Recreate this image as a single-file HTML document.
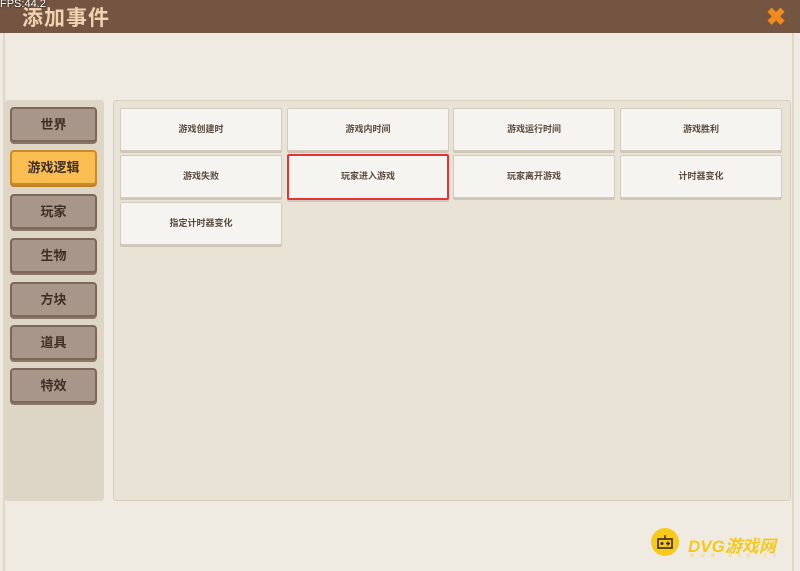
<!DOCTYPE html>
<html><head><meta charset="utf-8"><style>
*{margin:0;padding:0;box-sizing:border-box}
body{width:800px;height:571px;overflow:hidden;background:#efebe2;font-family:"Liberation Sans","Noto Sans CJK SC",sans-serif;position:relative}
.hdr{position:absolute;left:0;top:0;width:800px;height:33px;background:#735541}
.title{position:absolute;left:22px;top:2px;font-size:21px;font-weight:bold;color:#f0d2ae;letter-spacing:1px}
.fps{position:absolute;left:0;top:-2px;font-size:11px;color:#fff;text-shadow:0 0 2px #000}
.x{position:absolute;left:766px;top:3px;font-size:24px;font-weight:bold;color:#f08a1c}
.frame{position:absolute;left:3px;top:33px;width:791px;height:538px;border-left:2px solid #e0d6c6;border-right:2px solid #e0d6c6}
.side{position:absolute;left:5px;top:100px;width:99px;height:401px;background:#ddd6c7;border-radius:3px}
.main{position:absolute;left:113px;top:100px;width:678px;height:401px;background:#e9e3d6;border:1px solid #d8cfbe;border-radius:3px}
.sb{position:absolute;left:10px;width:87px;height:35px;background:#a8968a;border:2px solid #7d6758;border-radius:4px;color:#3f2f24;font-size:13px;font-weight:bold;text-align:center;line-height:31px;box-shadow:0 2px 0 #8a7566}
.sb.on{background:#f9bd52;border-color:#c98a2a;box-shadow:0 2px 0 #c08028}
.gb{position:absolute;width:162px;height:43px;background:#f6f4f0;border:1px solid #d3cbbe;border-radius:2px;box-shadow:0 2px 0 #cfc6b8;font-size:9px;color:#5a4a3e;text-align:center;line-height:41px;font-weight:bold}
.gb.sel{border:2px solid #e0343a;line-height:40px}
.logo{position:absolute;left:651px;top:528px;width:28px;height:28px;border-radius:50%;background:#f6c91c}
.lt{position:absolute;left:688px;top:532px;font-size:17px;font-weight:bold;font-style:italic;color:#f5c91c}
.ls{position:absolute;left:690px;top:553px;font-size:6px;color:#f5d55c;letter-spacing:6px}
</style></head><body>
<div class="hdr"></div>
<div class="title">添加事件</div>
<div class="fps">FPS:44.2</div>
<div class="x">✖</div>
<div class="frame"></div>
<div class="side"></div>
<div class="main"></div>
<div class="sb" style="top:107px">世界</div>
<div class="sb on" style="top:150px">游戏逻辑</div>
<div class="sb" style="top:194px">玩家</div>
<div class="sb" style="top:238px">生物</div>
<div class="sb" style="top:282px">方块</div>
<div class="sb" style="top:325px">道具</div>
<div class="sb" style="top:368px">特效</div>
<div class="gb" style="left:120px;top:108px">游戏创建时</div>
<div class="gb" style="left:287px;top:108px">游戏内时间</div>
<div class="gb" style="left:453px;top:108px">游戏运行时间</div>
<div class="gb" style="left:620px;top:108px">游戏胜利</div>
<div class="gb" style="left:120px;top:155px">游戏失败</div>
<div class="gb sel" style="left:287px;top:154px;height:46px">玩家进入游戏</div>
<div class="gb" style="left:453px;top:155px">玩家离开游戏</div>
<div class="gb" style="left:620px;top:155px">计时器变化</div>
<div class="gb" style="left:120px;top:202px">指定计时器变化</div>
<div class="logo"><svg width="28" height="28" viewBox="0 0 28 28"><rect x="7" y="11" width="14" height="9" fill="none" stroke="#3a2a10" stroke-width="1.6"/><circle cx="11" cy="15.5" r="1.5" fill="#3a2a10"/><path d="M15 15.5h4M17 13.5v4M14 11V8h1" stroke="#3a2a10" stroke-width="1.4" fill="none"/></svg></div>
<div class="lt">DVG游戏网</div>
<div class="ls">www.dvg.cn</div>
</body></html>
